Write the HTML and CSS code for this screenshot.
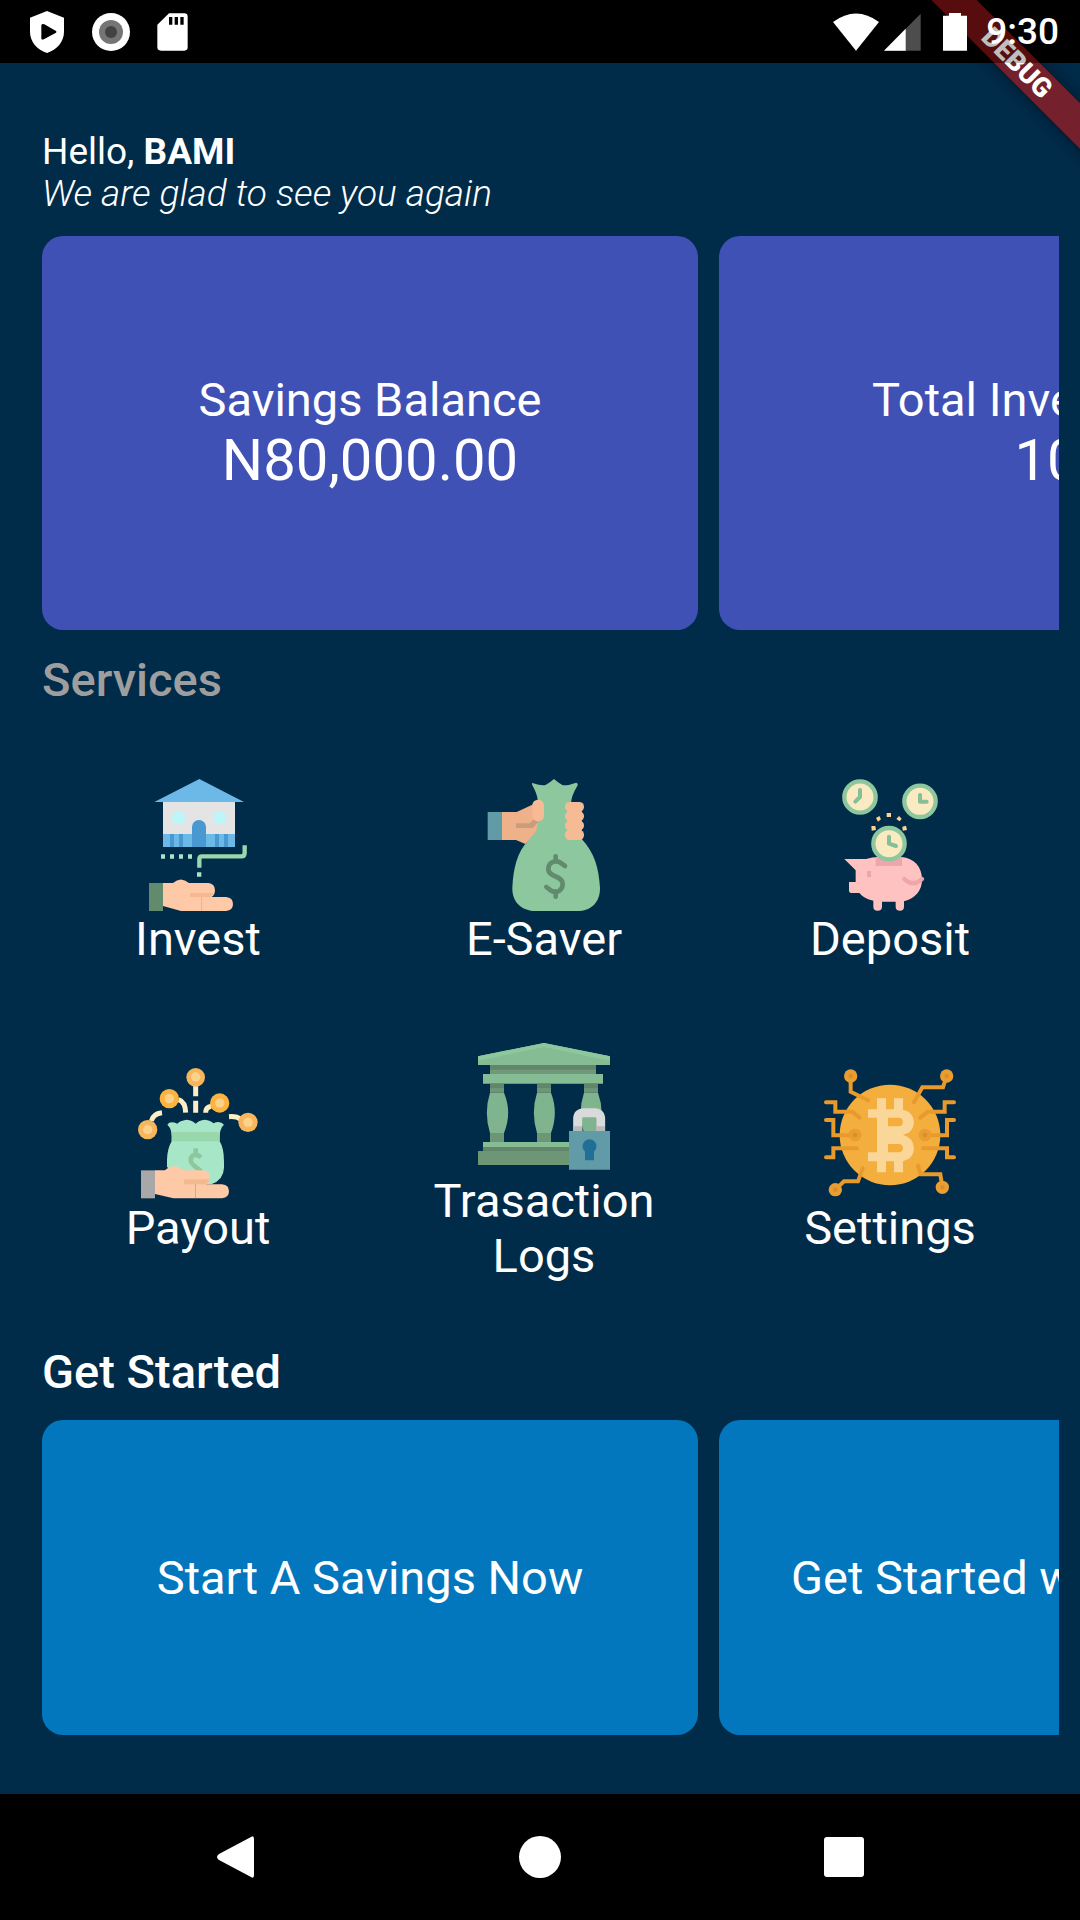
FILE: index.html
```html
<!DOCTYPE html>
<html lang="en">
<head>
<meta charset="utf-8">
<meta name="viewport" content="width=device-width, initial-scale=1">
<title>Savings dashboard</title>
<link rel="stylesheet" href="styles.css">
</head>
<body>
<div class="corner" aria-hidden="true"><div class="ribbon">DEBUG</div></div>

<header class="status">
  <div class="status-left">
    <svg width="36" height="42" viewBox="0 0 108 126"><path fill="#fff" fill-rule="evenodd" d="M54 0 105 20V62C105 92 84 116 54 126C24 116 3 92 3 62V20ZM37 43V83Q39 88 46 84L81 65Q84 63 81 60L46 40Q39 37 37 43Z"/></svg>
    <svg width="38" height="38" viewBox="0 0 38 38"><circle cx="19" cy="19" r="19" fill="#fff"/><circle cx="19" cy="19" r="12" fill="#757575"/><circle cx="19" cy="19" r="6" fill="#424242"/></svg>
    <svg width="31" height="38" viewBox="0 0 93 114"><path fill="#fff" fill-rule="evenodd" d="M36 1H82Q92 1 92 11V103Q92 113 82 113H12Q1 113 1 103V35ZM36 12V35H46V12ZM53 12V35H63V12ZM70 12V35H80V12Z"/></svg>
  </div>
  <div class="status-right">
    <svg width="46" height="38" viewBox="0 0 138 114"><path fill="#fff" d="M0 27Q69-24 138 27L69 113Z"/></svg>
    <svg class="signal" width="37" height="38" viewBox="0 0 111 114"><path fill="#4d4d4d" d="M110 2V113H0Z"/><path fill="#fff" d="M65 47V113H0Z"/></svg>
    <svg class="battery" width="24" height="38" viewBox="0 0 72 114"><path fill="#fff" d="M18 0H54V8H72V113H0V8H18Z"/></svg>
    <time class="clock">9:30</time>
  </div>
</header>

<main class="screen">
  <div class="greeting">
    <p>Hello, <strong>BAMI</strong></p>
    <p class="tagline">We are glad to see you again</p>
  </div>

  <section class="carousel" aria-label="Balances">
    <article class="card balance"><h2>Savings Balance</h2><p class="amount">N80,000.00</p></article>
    <article class="card balance"><h2>Total Investment</h2><p class="amount">10</p></article>
  </section>

  <h2 class="heading muted">Services</h2>
  <section class="services">
    <button class="service" type="button">
      <svg viewBox="6 54 396 396" aria-hidden="true">
        <path fill="#6cb8e6" d="M208 54 342 123H73Z"/><path fill="#e3e4e3" d="M99 123H315V219H99Z"/><path fill="#6cb8e6" d="M99 219H315V258H99Z"/>
        <path fill="#4799cf" d="M120 219h12v39h-12zM147 219h12v39h-12zM255 219h12v39h-12zM282 219h12v39h-12zM186 258V198a21 21 0 0 1 42 0V258Z"/>
        <circle cx="146" cy="170" r="20" fill="#bdf5f9"/><circle cx="269" cy="170" r="20" fill="#bdf5f9"/>
        <path fill="#a7e5c8" d="M93 280h12v13H93zM120 280h12v13h-12zM147 280h12v13h-12zM174 280h12v13h-12zM201 334h13v13h-13z"/>
        <path fill="none" stroke="#98d8ac" stroke-width="13" d="M208 320V294Q208 286 216 286H334Q344 286 344 276V253"/>
        <path fill="#618b6c" d="M57 366H99V450H57Z"/>
        <path fill="#fdc9a7" d="M99 366H129Q152 345 177 366H235Q255 368 255 388Q255 402 245 408H288Q309 410 309 429Q309 448 288 450H153L99 435Z"/>
        <path fill="#f5b990" d="M180 396H250Q247 404 240 408H180Z"/><path fill="#dfac8d" d="M213 408h2v42h-2z"/>
      </svg>
      <span>Invest</span>
    </button>
    <button class="service" type="button">
      <svg viewBox="24 54 396 396" aria-hidden="true">
        <path fill="#619ba7" d="M53 153H97V237H53Z"/>
        <path fill="#eeb18a" d="M96 153H140L190 130L214 180L200 218L166 249L138 237H96Z"/>
        <path fill="#cb9c7c" d="M138 187H179L193 173L207 181L188 201H138Z"/>
        <path fill="#8dc79e" d="M188 66Q218 76 228 71Q242 63 252 54Q264 65 277 72Q290 75 319 65Q325 67 323 73Q302 108 303 130C303 190 320 217 335 234C374 276 386 320 390 380C391 424 363 450 322 450H198C153 450 126 421 127 380C130 320 142 273 174 240C193 219 203 212 203 181V117Q202 100 187 73Q184 66 188 66Z"/>
        <rect x="187" y="116" width="35" height="65" rx="17" fill="#f6bb95"/>
        <g fill="#f6bb95"><rect x="285" y="123" width="57" height="29" rx="14"/><rect x="285" y="151" width="57" height="29" rx="14"/><rect x="285" y="179" width="57" height="29" rx="14"/><rect x="285" y="207" width="57" height="30" rx="14"/><path d="M292 136H335V223H292Z"/></g>
        <path fill="none" stroke="#618b6c" stroke-width="14" stroke-linecap="round" stroke-linejoin="round" d="M257 286V300M257 391V407M285 315L270 304C254 296 235 305 235 324C235 350 278 343 278 368C278 389 260 398 243 389L229 378"/>
      </svg>
      <span>E-Saver</span>
    </button>
    <button class="service" type="button">
      <svg viewBox="12 54 396 396" aria-hidden="true">
        <path fill="#fec3c1" d="M73 294H138Q155 288 180 288H245C282 291 306 317 306 355C306 390 286 412 252 421V437Q252 449 240 449Q227 449 227 437V422H186V437Q186 449 173 449Q160 449 160 437V419Q132 413 118 396H94Q87 396 87 388V363H107V328Z"/>
        <path fill="#efa5ac" d="M167 288H246V315H167ZM141 330h12v18h-12z"/><path fill="none" stroke="#efa5ac" stroke-width="13" stroke-linecap="round" d="M253 354Q279 380 306 354"/>
        <g fill="#faeac1" stroke="#8dc79e" stroke-width="13"><circle cx="120" cy="108" r="47"/><circle cx="300" cy="121" r="47"/><circle cx="207" cy="248" r="47"/></g>
        <path fill="none" stroke="#84bf96" stroke-width="12" stroke-linecap="round" stroke-linejoin="round" d="M120 87V108L106 122M300 102V122H320M207 227V248L228 255"/>
        <path fill="#fdd391" d="M200 156h13v12h-13zM168 171l10-6 5 10-9 7zM229 174l8-9 8 8-6 8zM154 195h12l2 12-13 2zM247 197l11-3 3 13-13 2z"/>
      </svg>
      <span>Deposit</span>
    </button>
    <button class="service" type="button">
      <svg viewBox="36 53 396 396" aria-hidden="true">
        <path fill="none" stroke="#fdeec5" stroke-width="15" d="M227 107V138M227 151V187M176 148Q196 155 197 187M257 187Q257 170 274 168M94 212Q99 190 126 187M327 199Q350 197 362 207"/>
        <g fill="#f7b65b"><circle cx="227" cy="81" r="28"/><circle cx="148" cy="145" r="29" fill="#fdb43e"/><circle cx="299" cy="158" r="29" fill="#fdb43e"/><circle cx="83" cy="238" r="29"/><circle cx="384" cy="216" r="29"/></g>
        <g fill="#fcd18c"><circle cx="227" cy="80" r="14"/><circle cx="148" cy="145" r="14"/><circle cx="299" cy="158" r="14"/><circle cx="83" cy="238" r="14"/><circle cx="384" cy="216" r="14"/></g>
        <path fill="#a8e6c8" d="M142 223Q150 210 172 220Q178 211 200 208Q217 210 227 220Q237 209 254 208Q272 210 280 219Q300 209 312 223Q297 234 299 273Q312 293 312 335V352Q311 388 274 402H200L141 350V328Q142 294 155 273Q158 237 142 223Z"/>
        <path fill="#98d8ac" d="M155 245H299V273H155Z"/>
        <path fill="none" stroke="#8dc79e" stroke-width="14" d="M227 294V312M243 321C232 310 213 311 212 329C211 344 233 351 244 364"/>
        <path fill="#a8a8a8" d="M63 360H105V444H63Z"/>
        <path fill="#fdc9a7" d="M105 360H135Q162 335 190 360H247Q270 361 270 382Q270 396 258 402H306Q327 404 327 423Q327 442 306 444H160L105 431Z"/>
        <path fill="#f5b990" d="M192 387H268Q266 397 258 402H192Z"/><path fill="#b29e8c" d="M226 402h2v42h-2z"/>
      </svg>
      <span>Payout</span>
    </button>
    <button class="service" type="button">
      <svg viewBox="54 30 396 396" aria-hidden="true">
        <path fill="#85bc94" d="M54 76 252 36 450 76V102H54Z"/><path fill="#8dc79e" d="M54 76 252 36 450 76V89L252 48 54 89Z"/>
        <path fill="#618669" d="M90 102H408V129H90Z"/><path fill="#6f9a79" d="M90 116H408V129H90Z"/>
        <path fill="#85bc94" d="M69 129H429V158H69Z"/>
        <path fill="#618669" d="M90 158h42v14H90zM231 158h42v14h-42zM372 158h42v14h-42z"/>
        <path fill="#6c9676" d="M90 171h42v14H90zM231 171h42v14h-42zM372 171h42v14h-42zM90 306h42v27H90zM231 306h42v27h-42z"/>
        <path fill="#80b48f" d="M90 185H132Q157 245 132 306H90Q71 245 90 185ZM231 185H273Q296 245 273 306H231Q212 245 231 185ZM372 185H414Q436 245 414 306H372Q352 245 372 185Z"/>
        <path fill="#85bc94" d="M69 333H340V348H69Z"/><path fill="#618669" d="M69 348H340V360H69Z"/><path fill="#6c9676" d="M54 360H340V402H54Z"/>
        <path fill="#002b49" d="M340 240H366V300H340ZM408 240H450V300H408Z"/>
        <path fill="none" stroke="#d9dada" stroke-width="27" d="M353 300V264Q353 245 372 245H404Q422 245 422 264V300"/>
        <path fill="#b9baba" d="M340 286h27v14h-27zM408 286h27v14h-27z"/>
        <path fill="#619ba7" d="M327 300H450V416H327Z"/><path fill="#226f96" d="M375 388V362A21 21 0 1 1 402 362V388Z"/>
      </svg>
      <span>Trasaction Logs</span>
    </button>
    <button class="service" type="button">
      <svg viewBox="42 53 396 396" aria-hidden="true">
        <circle cx="240" cy="254" r="151" fill="#f3ae3d"/>
        <path fill="none" stroke="#e99a2c" stroke-width="12" stroke-linecap="round" stroke-linejoin="miter" d="M122 77V124L174 150M410 77L399 111H337L312 156M48 156H76V184H127L149 202M432 156H404V184H353L331 202M48 209H70V255H135M432 209H411V255H345M48 321H70V294H141M432 321H411V294H339M76 418L102 393H144L158 354M397 411L391 372H332L324 346"/>
        <g fill="#ea9d30"><circle cx="122" cy="77" r="20"/><circle cx="410" cy="77" r="20"/><circle cx="76" cy="418" r="20"/><circle cx="397" cy="411" r="20"/><circle cx="135" cy="254" r="19"/><circle cx="345" cy="254" r="19"/></g>
        <g fill="#d98f2a"><circle cx="122" cy="77" r="7"/><circle cx="410" cy="77" r="7"/><circle cx="76" cy="418" r="7"/><circle cx="397" cy="411" r="7"/><circle cx="135" cy="254" r="7"/><circle cx="345" cy="254" r="7"/></g>
        <path fill="#fbd699" fill-rule="evenodd" d="M201 144H228V177H252V144H279V178Q312 186 312 217Q310 246 279 254Q310 262 312 294Q311 325 279 333V366H252V333H228V366H201V333H174V306H201V202H174V177H201ZM234 202V228H265Q278 228 279 215Q278 202 265 202ZM234 281V306H265Q278 306 279 294Q278 281 265 281Z"/>
      </svg>
      <span>Settings</span>
    </button>
  </section>

  <h2 class="heading">Get Started</h2>
  <section class="carousel" aria-label="Get started">
    <button class="card action" type="button">Start A Savings Now</button>
    <button class="card action" type="button">Get Started with Savings</button>
  </section>
</main>

<nav class="navbar" aria-label="System">
  <button type="button" aria-label="Back"><svg width="42" height="42" viewBox="0 0 42 42"><path fill="#fff" d="M36 1Q39-1 39 3V39Q39 43 36 41L4 24Q0 21 4 18Z"/></svg></button>
  <button type="button" aria-label="Home"><svg width="42" height="42" viewBox="0 0 42 42"><circle cx="21" cy="21" r="21" fill="#fff"/></svg></button>
  <button type="button" aria-label="Recent apps"><svg width="42" height="42" viewBox="0 0 42 42"><rect x="1" y="1" width="40" height="40" rx="3" fill="#fff"/></svg></button>
</nav>
</body>
</html>
```
FILE: styles.css
```css
* {
  box-sizing: border-box;
}

body {
  position: relative;
  display: flex;
  flex-direction: column;
  min-height: 100vh;
  margin: 0;
  background: #000;
  color: #fff;
  font-family: Roboto, "Liberation Sans", sans-serif;
}

h2,
p {
  margin: 0;
  font-weight: 400;
}

button {
  padding: 0;
  border: 0;
  background: none;
  color: inherit;
  font: inherit;
  cursor: pointer;
}

svg {
  display: block;
}

/* Debug ribbon across the top right corner, under the status bar tint */
.corner {
  position: absolute;
  top: 0;
  right: 0;
  z-index: 1;
  width: 200px;
  height: 200px;
  overflow: hidden;
  pointer-events: none;
}

.ribbon {
  position: absolute;
  top: 47px;
  left: 7px;
  width: 260px;
  height: 32px;
  background: rgba(183, 28, 28, 0.63);
  box-shadow: 0 0 16px rgba(0, 0, 0, 0.5);
  font-size: 27px;
  font-weight: 900;
  line-height: 32px;
  text-align: center;
  transform: rotate(45deg);
}

.status {
  position: relative;
  z-index: 2;
  display: flex;
  align-items: center;
  justify-content: space-between;
  height: 63px;
  padding: 0 21px 0 29px;
  background: rgba(0, 0, 0, 0.25);
}

.status-left,
.status-right {
  display: flex;
  align-items: center;
}

.status-left {
  gap: 27px;
}

.signal {
  margin-left: 5px;
}

.battery {
  margin-left: 22px;
}

.clock {
  margin-left: 19px;
  font-size: 37px;
  font-weight: 500;
  line-height: 43px;
}

.screen {
  flex: 1;
  padding: 68px 21px 59px 42px;
  background: #002b49;
}

.greeting {
  margin-bottom: 21px;
  font-size: 37px;
  line-height: 42px;
}

.greeting strong {
  font-weight: 700;
}

.tagline {
  font-style: italic;
  font-weight: 300;
}

.carousel {
  display: flex;
  gap: 21px;
  overflow-x: auto;
  scrollbar-width: none;
}

.card {
  display: flex;
  flex: 0 0 656px;
  flex-direction: column;
  align-items: center;
  justify-content: center;
  border-radius: 21px;
  font-size: 47px;
  line-height: 56px;
}

.balance {
  height: 394px;
  background: #3f51b5;
}

.balance h2 {
  font-size: 47px;
  line-height: 54px;
}

.amount {
  font-size: 58px;
  line-height: 66px;
}

.action {
  height: 315px;
  background: #0277bd;
}

.heading {
  margin: 38px 0 20px;
  font-size: 47px;
  font-weight: 500;
  line-height: 56px;
}

.muted {
  margin-top: 22px;
  color: #9e9e9e;
}

.services {
  display: grid;
  grid-template-columns: repeat(3, 1fr);
  grid-auto-rows: 289px;
  column-gap: 34px;
  margin-right: 13px;
}

.service {
  display: flex;
  flex-direction: column;
  align-items: center;
  justify-content: center;
  font-size: 47px;
  line-height: 55px;
}

.service svg {
  width: 132px;
  height: 132px;
}

.navbar {
  display: flex;
  align-items: center;
  justify-content: center;
  gap: 262px;
  height: 126px;
}
```
